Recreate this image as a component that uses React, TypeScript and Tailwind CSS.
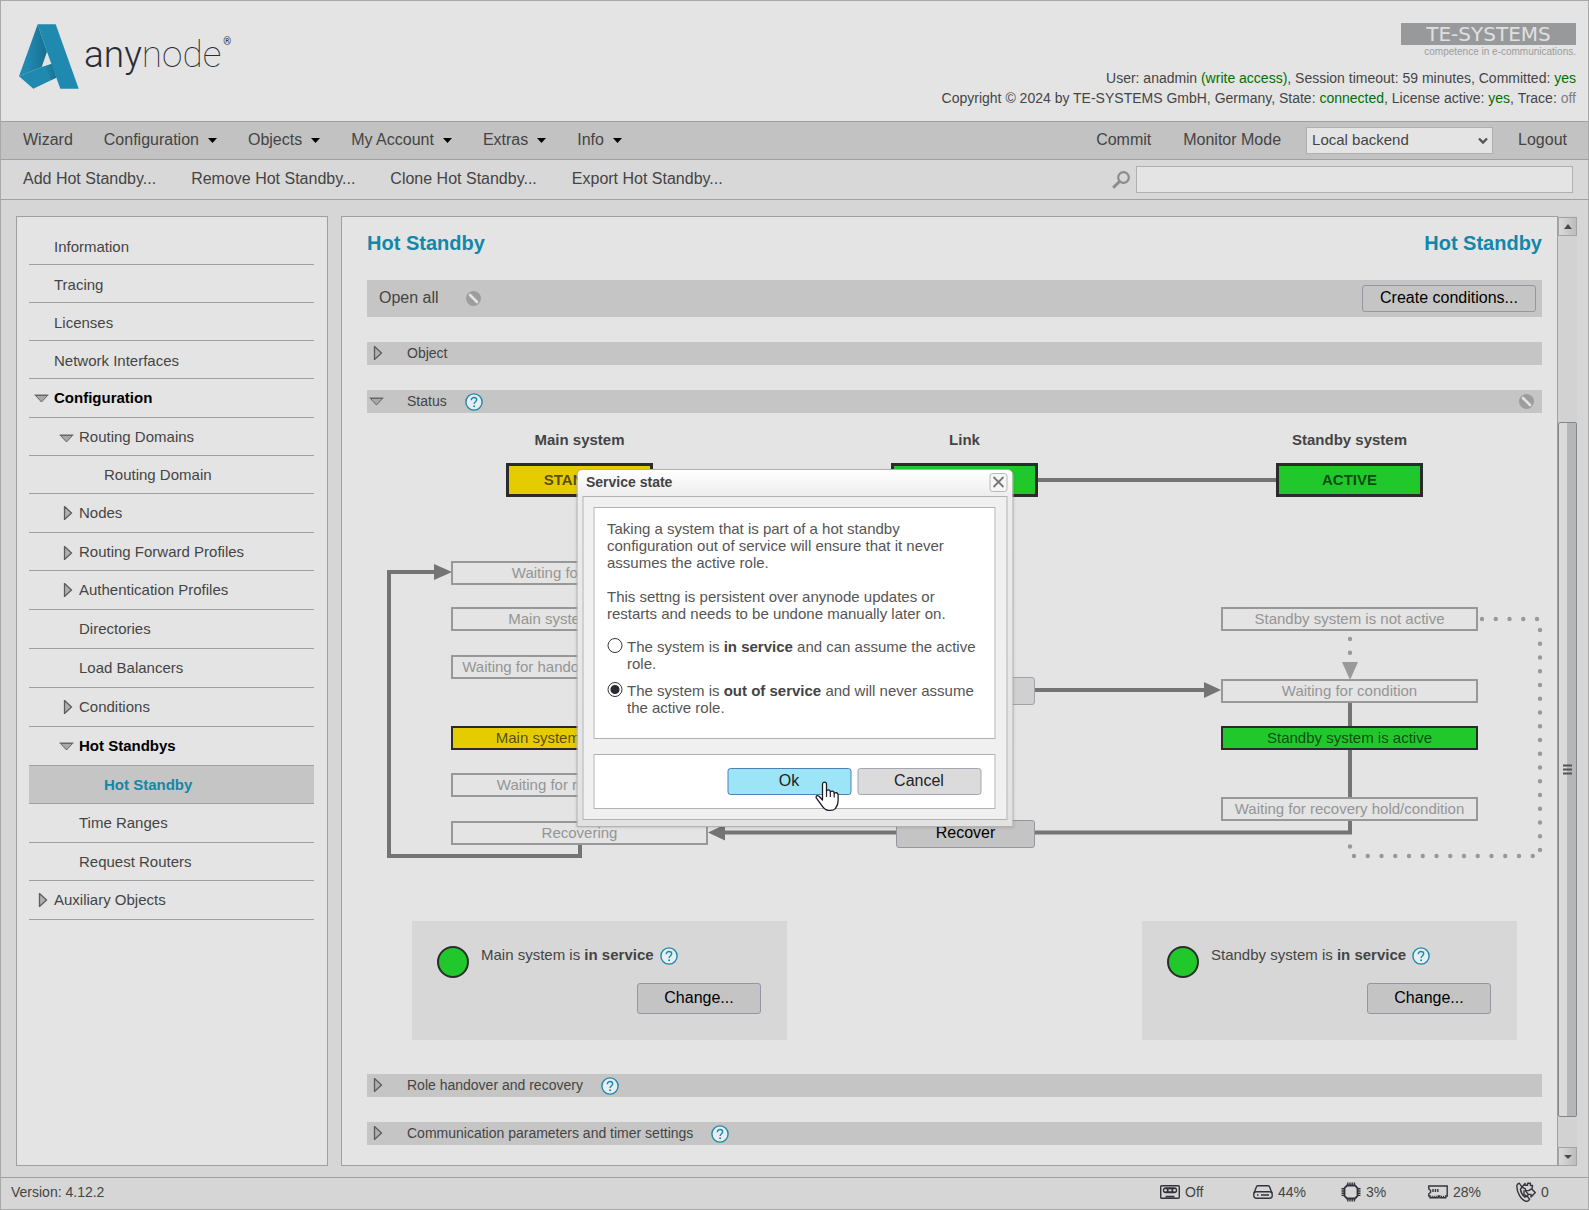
import { useState } from 'react';
import clsx from 'clsx';

interface TreeItem {
  label: string;
  level: 0 | 1 | 2;
  arrow?: 'open' | 'closed';
  strong?: boolean;
  selected?: boolean;
  tall?: boolean;
}

const treeItems: TreeItem[] = [
  { label: 'Information', level: 0 },
  { label: 'Tracing', level: 0 },
  { label: 'Licenses', level: 0 },
  { label: 'Network Interfaces', level: 0 },
  { label: 'Configuration', level: 0, arrow: 'open', strong: true, tall: true },
  { label: 'Routing Domains', level: 1, arrow: 'open' },
  { label: 'Routing Domain', level: 2 },
  { label: 'Nodes', level: 1, arrow: 'closed', tall: true },
  { label: 'Routing Forward Profiles', level: 1, arrow: 'closed' },
  { label: 'Authentication Profiles', level: 1, arrow: 'closed', tall: true },
  { label: 'Directories', level: 1, tall: true },
  { label: 'Load Balancers', level: 1, tall: true },
  { label: 'Conditions', level: 1, arrow: 'closed', tall: true },
  { label: 'Hot Standbys', level: 1, arrow: 'open', strong: true, tall: true },
  { label: 'Hot Standby', level: 2, selected: true },
  { label: 'Time Ranges', level: 1, tall: true },
  { label: 'Request Routers', level: 1 },
  { label: 'Auxiliary Objects', level: 0, arrow: 'closed', tall: true },
];

const menuItems = [
  { label: 'Wizard', menu: false },
  { label: 'Configuration', menu: true },
  { label: 'Objects', menu: true },
  { label: 'My Account', menu: true },
  { label: 'Extras', menu: true },
  { label: 'Info', menu: true },
];

const toolItems = ['Add Hot Standby...', 'Remove Hot Standby...', 'Clone Hot Standby...', 'Export Hot Standby...'];

// state boxes of the diagram, placed on its canvas
const mainStates = [
  { label: 'Waiting for condition', place: 'top-[148px]' },
  { label: 'Main system is active', place: 'top-[194px]' },
  { label: 'Waiting for handover hold/condition', place: 'top-[242px]' },
  { label: 'Main system is not active', place: 'top-[313px]', color: 'yellow' },
  { label: 'Waiting for recovery hold', place: 'top-[360px]' },
  { label: 'Recovering', place: 'top-[408px]' },
];

const standbyStates = [
  { label: 'Standby system is not active', place: 'top-[194px]' },
  { label: 'Waiting for condition', place: 'top-[266px]' },
  { label: 'Standby system is active', place: 'top-[313px]', color: 'green' },
  { label: 'Waiting for recovery hold/condition', place: 'top-[384px]' },
];

function Arrow({ open }: { open: boolean }) {
  return open ? (
    <svg width="15" height="14" viewBox="0 0 15 14" className="shrink-0">
      <path d="M1.5 4.5H13.5L7.5 11Z" fill="#a8a8a8" stroke="#666" />
      <path d="M0.5 4H14.5" stroke="#666" />
    </svg>
  ) : (
    <svg width="15" height="14" viewBox="0 0 15 14" className="shrink-0">
      <path d="M5.5 0.5L12.5 7L5.5 13.5Z" fill="#b0b0b0" stroke="#5c5c5c" strokeWidth="1.3" />
    </svg>
  );
}

function Help() {
  return (
    <button type="button" aria-label="Help" className="shrink-0">
      <svg width="18" height="18" viewBox="0 0 18 18" fill="none">
        <circle cx="9" cy="9" r="8.1" fill="#e8eef0" stroke="#1d89ad" strokeWidth="1.4" />
        <path d="M6.3 7.2C6.3 5.4 7.5 4.5 9 4.5C10.6 4.5 11.7 5.4 11.7 6.8C11.7 8.7 9.1 8.7 9.1 11" stroke="#1d89ad" strokeWidth="1.4" />
        <circle cx="9.1" cy="13.3" r="1" fill="#1d89ad" />
      </svg>
    </button>
  );
}

function Blocked() {
  return (
    <svg width="15" height="15" viewBox="0 0 15 15" className="shrink-0">
      <circle cx="7.5" cy="7.5" r="7.5" fill="#9d9d9d" />
      <path d="M4 4L11 11" stroke="#e4e4e4" strokeWidth="2.6" strokeLinecap="round" />
    </svg>
  );
}

function SectionBar({ label, open = false, help = false, blocked = false }: {
  label: string;
  open?: boolean;
  help?: boolean;
  blocked?: boolean;
}) {
  return (
    <div className="flex h-[23px] items-center bg-[#c5c5c5] pl-0.5 pr-2 text-sm">
      <button type="button" className="flex items-center gap-[23px] pb-0.5">
        <Arrow open={open} />
        <span>{label}</span>
      </button>
      {help && <span className="ml-[18px] flex"><Help /></span>}
      {blocked && <span className="ml-auto"><Blocked /></span>}
    </div>
  );
}

function StateBox({ label, place, color, side }: { label: string; place: string; color?: string; side: string }) {
  return (
    <div
      className={clsx(
        'absolute flex h-6 w-[257px] items-center justify-center border-2 text-[15px] whitespace-nowrap',
        place,
        side,
        !color && 'border-[#989898] bg-[#e4e4e4] text-[#959595]',
        color === 'yellow' && 'border-[#2b2b2b] bg-[#e5cc00] text-black/65',
        color === 'green' && 'border-[#2b2b2b] bg-[#20c82c] text-black/65'
      )}
    >
      {label}
    </div>
  );
}

function SystemBox({ title, state, side, color }: { title: string; state?: string; side: string; color: string }) {
  return (
    <div className={clsx('absolute top-4 flex w-[147px] flex-col items-center gap-3 text-[15px] font-bold', side)}>
      <span className="leading-[22px]">{title}</span>
      <div className={clsx('flex h-[34px] w-full items-center justify-center border-3 border-[#2b2b2b] text-black/65', color)}>
        {state}
      </div>
    </div>
  );
}

function Diagram() {
  return (
    <div className="relative ml-5 h-[508px] w-[1155px]">
      <svg width="1160" height="508" viewBox="0 0 1160 508" fill="none" className="absolute left-0 top-0">
        <g stroke="#747474" strokeWidth="4">
          <path d="M266 67H504M651 67H889" />
          <path d="M193 431V443H2V159H50" />
          <path d="M321 277H509M648 277H820" />
          <path d="M963 289V313M963 337V384" />
          <path d="M963 407V419.5H648M509 419.5H335" />
        </g>
        <g fill="#747474">
          <path d="M47 151L65 159L47 167Z" />
          <path d="M817 269L834 277L817 285Z" />
          <path d="M338 411.5L321 419.5L338 427.5Z" />
        </g>
        <path d="M955 249H971L963 267Z" fill="#999" />
        <g stroke="#999" strokeWidth="4.4" strokeLinecap="round" strokeDasharray="0 13.75">
          <path d="M1095 206H1152" />
          <path d="M1153 217V440" />
          <path d="M967 443H1148" />
          <path d="M963 433.5V440" />
          <path d="M963 226V244" />
        </g>
      </svg>

      <SystemBox title="Main system" state="STANDBY" side="left-[119px]" color="bg-[#e5cc00]" />
      <SystemBox title="Link" side="left-[504px]" color="bg-[#20c82c]" />
      <SystemBox title="Standby system" state="ACTIVE" side="left-[889px]" color="bg-[#20c82c]" />

      {mainStates.map(state => <StateBox key={state.label} {...state} side="left-16" />)}
      {standbyStates.map(state => <StateBox key={state.label} {...state} side="left-[834px]" />)}

      <button
        type="button"
        aria-label="Handover"
        className="absolute left-[509px] top-[264px] h-7 w-[139px] rounded-[3px] border border-[#a0a3ac] bg-[#d0d0d0]"
      />
      <button type="button" className="absolute left-[509px] top-[407px] h-7 w-[139px] rounded-[3px] border border-[#9496a0] bg-[#c4c4c4] pb-0.5 text-base text-black">
        Recover
      </button>
    </div>
  );
}

function ServiceCard({ system }: { system: string }) {
  return (
    <div className="flex h-[119px] w-[375px] gap-3 bg-[#d7d7d7] pt-[25px] pr-[26px] pb-[26px] pl-[25px] text-[15px]">
      <div className="size-8 shrink-0 rounded-full border-2 border-[#2b2b2b] bg-[#20c82c]" />
      <div className="flex flex-1 flex-col justify-between">
        <div className="flex items-start gap-1.5 leading-[18px]">
          <span>{system} is <b>in service</b></span>
          <span className="flex pt-px"><Help /></span>
        </div>
        <button type="button" className="h-[31px] w-[124px] self-end rounded-[3px] border border-[#9496a0] bg-[#c4c4c4] pb-0.5 text-base text-black">
          Change...
        </button>
      </div>
    </div>
  );
}

function ServiceDialog() {
  const [service, setService] = useState('out');

  return (
    <div
      role="dialog"
      aria-labelledby="dialog-title"
      className="absolute left-1/2 top-[468px] w-[437px] -translate-x-1/2 rounded-t-md border border-[#b2b2b2] bg-linear-to-b from-white via-[#ececec] via-8% to-[#e2e2e2] px-[5px] pb-1.5 shadow-sm"
    >
      <div className="flex h-[26px] items-center justify-between pb-0.5 pl-1">
        <h2 id="dialog-title" className="text-sm font-bold text-[#444]">Service state</h2>
        <button type="button" aria-label="Close" className="flex h-[19px] w-[18px] items-center justify-center rounded-[3px] border border-[#b8b8b8] bg-[#f6f6f6]">
          <svg width="12" height="12" viewBox="0 0 12 12" stroke="#777" strokeWidth="1.8">
            <path d="M1 1L11 11M11 1L1 11" />
          </svg>
        </button>
      </div>
      <div className="flex flex-col gap-[15px] border border-[#b2b2b2] bg-[#f0f0f0] py-[10px] pr-[11px] pl-[10px]">
        <div className="border border-[#b2b2b2] bg-white px-[13px] pt-3 pb-[22px] text-[15px] leading-[17px] text-[#555]">
          <p>
            Taking a system that is part of a hot standby configuration out of service will ensure that it never assumes the active role.
          </p>
          <p className="mt-[17px]">
            This settng is persistent over anynode updates or restarts and needs to be undone manually later on.
          </p>
          <div className="mt-4 flex flex-col gap-[10px]">
            <label className="flex items-start gap-[5px]">
              <input
                type="radio"
                name="service"
                checked={service === 'in'}
                onChange={() => setService('in')}
                className="size-[15px] shrink-0 appearance-none rounded-full border border-[#33333b] bg-white checked:bg-[radial-gradient(circle,#2b2b33_4px,#fff_5px)]"
              />
              <span>The system is <b className="text-[#444]">in service</b> and can assume the active role.</span>
            </label>
            <label className="flex items-start gap-[5px]">
              <input
                type="radio"
                name="service"
                checked={service === 'out'}
                onChange={() => setService('out')}
                className="size-[15px] shrink-0 appearance-none rounded-full border border-[#33333b] bg-white checked:bg-[radial-gradient(circle,#2b2b33_4px,#fff_5px)]"
              />
              <span>The system is <b className="text-[#444]">out of service</b> and will never assume the active role.</span>
            </label>
          </div>
        </div>
        <div className="flex justify-end gap-1.5 border border-[#b2b2b2] bg-white px-[13px] py-[13px]">
          <button type="button" className="h-[27px] w-[124px] rounded-[3px] border border-[#4f7fb5] bg-[#9ce5f7] pb-0.5 text-base text-[#222]">
            Ok
          </button>
          <button type="button" className="h-[27px] w-[124px] rounded-[3px] border border-[#a3a6b0] bg-[#dbdbdb] pb-0.5 text-base text-[#222]">
            Cancel
          </button>
        </div>
      </div>

      {/* hand pointer over the Ok button */}
      <svg width="25" height="31" viewBox="0 0 25 31" className="absolute left-[237px] top-[311px]">
        <path
          d="M8 19V3.2C8 0.4 12 0.4 12 3.2V10.5C12 8.2 15.6 8.2 15.8 10.6V11.4C16.4 9.4 19.6 9.8 19.7 12V12.8C20.4 11 23.6 11.4 23.6 14V20C23.6 24 21.8 26 20.8 27.6C19.4 29.2 16.6 29.6 14.4 29.4C11 29.2 8.8 27 7.2 24.4L3 18.6C0.2 16 1.8 13.4 4.6 15.2Z"
          fill="#fff"
          stroke="#1c1c2c"
          strokeWidth="1.3"
          strokeLinejoin="round"
        />
        <path d="M12 10.5V16M15.8 11.5V16M19.7 12.8V16.5" stroke="#1c1c2c" strokeWidth="1.2" />
      </svg>
    </div>
  );
}

function Scrollbar() {
  return (
    <div className="flex w-[19px] flex-col bg-[#d2d2d2] pt-px">
      <button type="button" aria-label="Scroll up" className="flex h-[19px] items-center justify-center border border-[#a4a4a4] bg-linear-to-r from-[#dadada] to-[#bcbcbc]">
        <svg width="8" height="5" viewBox="0 0 8 5"><path d="M0 5L4 0L8 5Z" fill="#4a4a4a" /></svg>
      </button>
      <div className="flex-[187]" />
      <div className="flex flex-[696] items-center justify-center rounded-[2px] border border-[#858585] bg-linear-to-r from-[#dadada] from-45% to-[#b4b6b8] to-50%">
        <svg width="9" height="12" viewBox="0 0 9 12" stroke="#555" strokeWidth="2">
          <path d="M0 1.5H9M0 5.5H9M0 9.5H9" />
        </svg>
      </div>
      <div className="flex-[30]" />
      <button type="button" aria-label="Scroll down" className="flex h-[19px] items-center justify-center border border-[#a4a4a4] bg-linear-to-r from-[#dadada] to-[#bcbcbc]">
        <svg width="8" height="4" viewBox="0 0 8 4"><path d="M0 0H8L4 4Z" fill="#4a4a4a" /></svg>
      </button>
    </div>
  );
}

function Logo() {
  return (
    <svg width="60" height="65" viewBox="0 0 60 65" className="shrink-0">
      <defs>
        <linearGradient id="limb" x1="0" y1="0" x2="1" y2="0">
          <stop offset="0.3" stopColor="#2089b0" />
          <stop offset="1" stopColor="#17708f" />
        </linearGradient>
        <linearGradient id="fold" x1="0" y1="0" x2="0.3" y2="1">
          <stop offset="0" stopColor="#17708f" />
          <stop offset="0.35" stopColor="#2089b0" />
        </linearGradient>
        <linearGradient id="tail" x1="0" y1="0" x2="1" y2="0">
          <stop offset="0" stopColor="#17708f" stopOpacity="0" />
          <stop offset="1" stopColor="#17708f" />
        </linearGradient>
      </defs>
      <path d="M18.7 0.3L28 27.7L22.7 43L0 52.3Z" fill="url(#limb)" />
      <path d="M0 52.3L22.7 43L33 39.7L37.3 53.7L14.3 64.7Z" fill="url(#fold)" />
      <path d="M26 42L33 39.7L37.3 53.7L32 56Z" fill="url(#tail)" />
      <path d="M18.7 0.3H36.7L59.7 64.7H41.3L28 27.7Z" fill="#2089b0" />
    </svg>
  );
}

function Header() {
  return (
    <header className="flex h-[120px] items-start justify-between pr-3 pl-[18px]">
      <div className="flex items-start pt-[23px]">
        <Logo />
        <div className="ml-[5px] mt-[9px] flex items-start font-[Roboto] text-[37px] leading-[44px] text-[#2b2b35]">
          <span className="font-light">any</span>
          <span className="font-thin">node</span>
          <span className="ml-0.5 text-[10px] leading-[18px]">®</span>
        </div>
      </div>
      <div className="flex flex-col items-end pt-[22px]">
        <div className="flex h-[22px] w-[175px] items-center justify-center bg-[#98999b] font-['DejaVu_Sans'] text-xl leading-[22px] text-[#e0e0e0]">
          TE-SYSTEMS
        </div>
        <div className="text-[10px] leading-[14px] text-[#9c9c9c]">competence in e-communications.</div>
        <div className="mt-[9px] text-right text-sm leading-5">
          <p>
            User: anadmin <span className="text-[#007000]">(write access)</span>, Session timeout: 59 minutes, Committed: <span className="text-[#007000]">yes</span>
          </p>
          <p>
            Copyright © 2024 by TE-SYSTEMS GmbH, Germany, State: <span className="text-[#007000]">connected</span>, License active: <span className="text-[#007000]">yes</span>, Trace: <span className="text-[#808080]">off</span>
          </p>
        </div>
      </div>
    </header>
  );
}

function Footer() {
  return (
    <footer className="flex h-8 items-center border-t border-[#a0a0a0] bg-[#d6d6d6] pb-[3px] pl-2.5 text-sm">
      <span>Version: 4.12.2</span>
      <div className="ml-auto flex w-[93px] items-center gap-[5px]">
        <svg width="20" height="14" viewBox="0 0 20 14" fill="none" stroke="#33333b" strokeWidth="1.4">
          <rect x="0.7" y="0.7" width="18.6" height="12.6" rx="1" />
          <rect x="3.5" y="3" width="13" height="4.6" rx="2.3" fill="#33333b" />
          <circle cx="5.5" cy="5.3" r="1.3" fill="#d6d6d6" stroke="none" />
          <circle cx="14.5" cy="5.3" r="1.3" fill="#d6d6d6" stroke="none" />
          <path d="M8.5 5.3H11.5" stroke="#d6d6d6" strokeWidth="1.8" />
          <path d="M5 12.5L6 10.7H14L15 12.5Z" fill="#33333b" stroke="none" />
        </svg>
        Off
      </div>
      <div className="flex w-[88px] items-center gap-[5px]">
        <svg width="20" height="14" viewBox="0 0 20 14" fill="none" stroke="#33333b" strokeWidth="1.4">
          <path d="M1 8L3.6 1.5Q4 0.8 4.8 0.8H15.2Q16 0.8 16.4 1.5L19 8" />
          <rect x="0.8" y="6.8" width="18.4" height="6.4" rx="2.4" />
          <path d="M4 10H5.5M8 10H16" />
        </svg>
        44%
      </div>
      <div className="flex w-[87px] items-center gap-[5px]">
        <svg width="20" height="20" viewBox="0 0 20 20" fill="none" stroke="#33333b" strokeWidth="1.8">
          <path d="M6 3.5H14L16.5 6V14L14 16.5H6L3.5 14V6Z" />
          <path d="M6.8 0.5V3M9 0.5V3M11.2 0.5V3M13.4 0.5V3M6.8 17V19.5M9 17V19.5M11.2 17V19.5M13.4 17V19.5M0.5 6.8H3M0.5 9H3M0.5 11.2H3M0.5 13.4H3M17 6.8H19.5M17 9H19.5M17 11.2H19.5M17 13.4H19.5" strokeWidth="1.4" />
        </svg>
        3%
      </div>
      <div className="flex w-[88px] items-center gap-[5px]">
        <svg width="20" height="14" viewBox="0 0 20 14" fill="none" stroke="#33333b" strokeWidth="1.4">
          <path d="M0.8 1H19.2V11H17.8V12.8H11.8V11H10.2V12.8H2V11H0.8V8.8L2.6 7.5V5.5L0.8 4Z" />
          <path d="M5 4V7M7.4 4V7M9.8 4V7" />
          <path d="M4.2 13V10.8M6.2 13V10.8M8.2 13V10.8M13.6 13V10.8M15.6 13V10.8" strokeWidth="1.1" />
        </svg>
        28%
      </div>
      <div className="flex w-[72px] items-center gap-[5px]">
        <svg width="20" height="20" viewBox="0 0 20 20" fill="none" stroke="#33333b" strokeWidth="1.4" strokeLinejoin="round">
          <path d="M0.9 3.4Q1.4 1.6 3.2 1.2L6 5.2L4.4 7.2Q5 11.8 8.6 15L11.4 14.4L13.6 17.4Q12.4 19.2 10.4 19.4C4.6 18 0.4 9.4 0.9 3.4Z" />
          <path d="M6 5.2L9 1.4V3.2H11.6V1.2H14.4V3.6L16.6 3.4L16 6.6L12.6 8.6H9.4V6.8L6 5.2Z" />
          <path d="M8 8.2V12.6L11.4 14.4L12.2 12.4H15V15L19.3 10.6L15.4 6.8" />
          <path d="M9.4 8.6L12.2 12.4" />
        </svg>
        0
      </div>
    </footer>
  );
}

export default function App() {
  return (
    <div className="relative flex min-h-screen flex-col border border-[#a9a9a9] bg-[#e4e4e4] font-['Liberation_Sans',Arial,sans-serif] text-[#444]">
      <Header />

      <nav className="flex h-[39px] items-center justify-between border-y border-[#a0a0a0] bg-[#c2c2c2] pr-[21px] pl-[22px] text-base">
        <div className="flex items-center gap-[31px]">
          {menuItems.map(item => (
            <button key={item.label} type="button" className="flex items-center gap-[9px] pb-0.5">
              {item.label}
              {item.menu && (
                <svg width="9" height="5" viewBox="0 0 9 5" className="mt-0.5"><path d="M0 0H9L4.5 5Z" fill="#000" /></svg>
              )}
            </button>
          ))}
        </div>
        <div className="flex items-center">
          <button type="button" className="pb-0.5">Commit</button>
          <button type="button" className="ml-8 pb-0.5">Monitor Mode</button>
          <div className="relative mr-[25px] ml-[25px]">
            <select aria-label="Backend" className="h-[27px] w-[187px] appearance-none border border-[#b0b0b0] bg-[#e4e4e4] pl-[5px] text-[15px]">
              <option>Local backend</option>
            </select>
            <svg width="10" height="8" viewBox="0 0 10 8" fill="none" className="pointer-events-none absolute right-[5px] top-[10px]">
              <path d="M1 1.5L5 5.5L9 1.5" stroke="#555" strokeWidth="2.4" />
            </svg>
          </div>
          <button type="button" className="pb-0.5">Logout</button>
        </div>
      </nav>

      <div className="flex h-10 items-center justify-between border-b border-[#a0a0a0] bg-[#d8d8d8] pr-[15px] pl-[22px] text-base">
        <div className="flex items-center gap-[35px] pb-0.5">
          {toolItems.map(label => <button key={label} type="button">{label}</button>)}
        </div>
        <label className="flex items-center gap-1.5">
          <svg width="18" height="18" viewBox="0 0 18 18" fill="none" stroke="#8c8c8c">
            <circle cx="11.5" cy="6.5" r="5.3" strokeWidth="2.2" />
            <path d="M7.5 10.5L1.2 16.8" strokeWidth="3" />
          </svg>
          <input type="text" aria-label="Search" className="h-[27px] w-[437px] border border-[#b0b0b0] bg-[#e4e4e4] px-1.5" />
        </label>
      </div>

      <div className="flex flex-1 bg-[#d6d6d6] pt-4 pr-[11px] pb-[11px] pl-[15px]">
        <aside className="w-[312px] shrink-0 border border-[#a0a0a0] bg-[#e4e4e4] pt-[10px] pr-[13px] pl-3 text-[15px]">
          {treeItems.map(item => (
            <a
              key={item.label}
              href="#"
              className={clsx(
                'flex items-center gap-[5px] border-b border-[#a0a0a0]',
                item.tall ? 'h-[39px]' : 'h-[38px]',
                !item.tall && (item.level === 0 ? 'pt-1' : 'pt-0.5'),
                item.level === 0 && 'pl-[5px]',
                item.level === 1 && 'pl-[30px]',
                item.level === 2 && 'pl-[55px]',
                item.strong && 'font-bold text-black',
                item.selected && 'bg-[#c5c5c5] font-bold text-[#1387a8]'
              )}
            >
              {item.arrow ? <Arrow open={item.arrow === 'open'} /> : <span className="w-[15px]" />}
              {item.label}
            </a>
          ))}
        </aside>

        <main className="ml-[13px] flex flex-1 flex-col border border-[#a0a0a0] bg-[#e4e4e4] pt-3 pr-[15px] pb-5 pl-[25px]">
          <div className="flex justify-between text-xl font-bold text-[#1387a8]">
            <h1>Hot Standby</h1>
            <span>Hot Standby</span>
          </div>
          <div className="mt-[23px] mb-[25px] flex h-[37px] items-center bg-[#c5c5c5] pr-1.5 pl-3 text-base">
            <button type="button" className="mr-[27px] pb-0.5">Open all</button>
            <Blocked />
            <button type="button" className="ml-auto h-[27px] w-[174px] rounded-[3px] border border-[#9496a0] pb-0.5 text-black">
              Create conditions...
            </button>
          </div>
          <div className="flex flex-col gap-[25px]">
            <SectionBar label="Object" />
            <SectionBar label="Status" open help blocked />
          </div>
          <Diagram />
          <div className="mb-[34px] flex justify-between pr-[25px] pl-[45px]">
            <ServiceCard system="Main system" />
            <ServiceCard system="Standby system" />
          </div>
          <div className="flex flex-col gap-[25px]">
            <SectionBar label="Role handover and recovery" help />
            <SectionBar label="Communication parameters and timer settings" help />
          </div>
        </main>
        <Scrollbar />
      </div>

      <Footer />
      <ServiceDialog />
    </div>
  );
}
